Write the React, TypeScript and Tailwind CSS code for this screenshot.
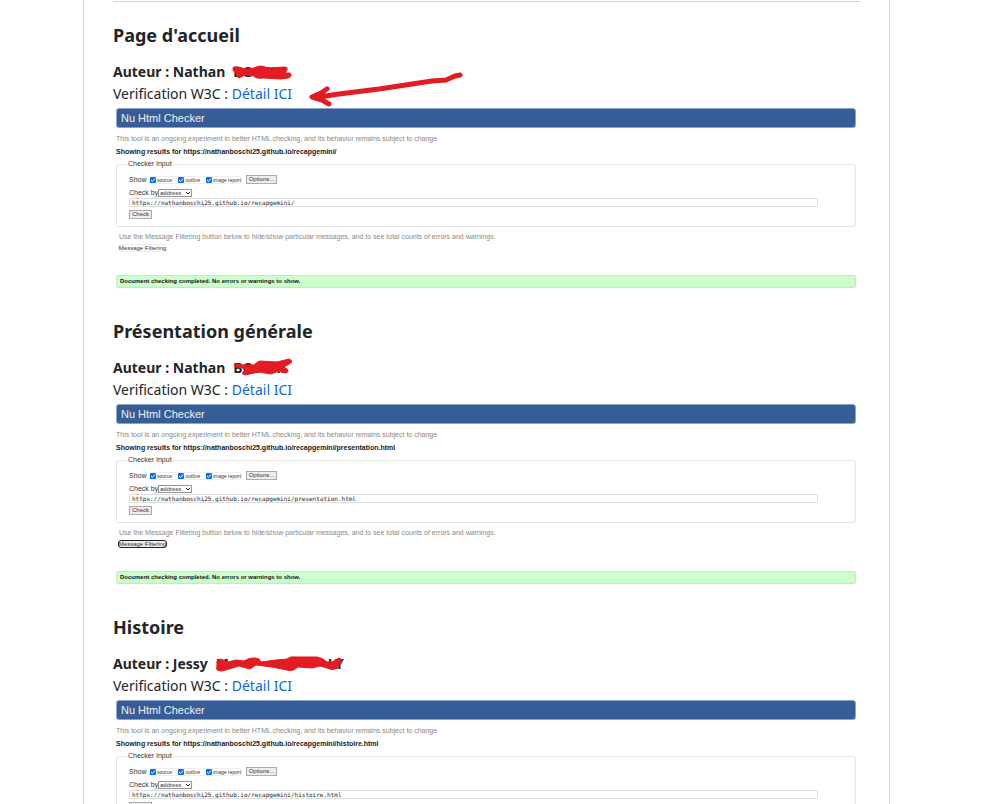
import React from "react";

type Entry = {
  title: string;
  author: string;
  name: React.ReactNode;
  page: string;
  focused?: boolean;
  results?: boolean;
};

const RED = "#e31b23";

function Scribble({ d }: { d: string }) {
  return (
    <svg className="pointer-events-none absolute left-0 top-0 overflow-visible" width="130" height="22" fill={RED} stroke={RED} strokeWidth="1" strokeLinejoin="round" aria-hidden="true">
      <path d={d} />
    </svg>
  );
}

function Arrow() {
  return (
    <svg className="pointer-events-none absolute -top-4 left-[196px] overflow-visible" width="156" height="42" fill="none" stroke={RED} strokeWidth="5" strokeLinecap="round" strokeLinejoin="round" aria-hidden="true">
      <path d="M151 8l-5 1-9 4-14 1-53 8-40 5-20 3M18 22l-6 4-9 4 10 3 7 4" />
    </svg>
  );
}

const entries: Entry[] = [
  {
    title: "Page d'accueil",
    author: "Nathan",
    name: (
      <>
        <span>BOSCHI</span>
        <Scribble d="M0 7C2 4 8 7 13 8L21 7Q28 3 34 7L52 6Q55 6 54 9L52 12 57 12Q60 15 55 17L48 18 30 17Q23 18 21 15L12 14 6 17Q3 16 3 12Q-1 10 0 7Z" />
      </>
    ),
    page: "",
    results: true,
  },
  {
    title: "Présentation générale",
    author: "Nathan",
    name: (
      <>
        <span>BOSCHI</span>
        <Scribble d="M2 7L11 8 22 8Q23 5 27 4L44 5 56 2Q60 3 58 6L51 10 54 12Q57 15 52 16L46 14 38 17 26 15 12 18Q8 17 10 15L15 12 3 10Q0 9 2 7Z" />
      </>
    ),
    page: "presentation.html",
    focused: true,
    results: true,
  },
  {
    title: "Histoire",
    author: "Jessy",
    name: (
      <>
        <span className="flex w-[128px] justify-between"><span>M</span><span>LY</span></span>
        <Scribble d="M1 8L5 6 12 9 20 7 28 8Q36 3 43 6L45 9 60 7 71 6Q74 3 80 4L101 4Q107 5 111 9L116 9 123 5Q127 6 125 9L122 15Q116 18 111 15L104 13 96 15 82 14Q76 19 71 17L56 14 40 12 34 16 23 13 6 18Q-1 18 1 14Z" />
      </>
    ),
    page: "histoire.html",
  },
];

function Tick({ id, label, width }: { id: string; label: string; width: string }) {
  return (
    <span className={`relative flex items-center gap-px ${width}`}>
      <input id={id} type="checkbox" defaultChecked className="size-[6px] shrink-0 appearance-none rounded-[1px] bg-[#0d6fe8]" />
      <svg className="pointer-events-none absolute left-0" width="6" height="6" fill="none" stroke="#fff" aria-hidden="true"><path d="M1 3l1.5 1.5L5 1.5" /></svg>
      <label htmlFor={id} className="whitespace-nowrap text-[5px] leading-[6px]">{label}</label>
    </span>
  );
}

function Checker({ page, focused, results }: { page: string; focused?: boolean; results?: boolean }) {
  const id = page || "accueil";
  const url = `https://nathanboschi25.github.io/recapgemini/${page}`;
  return (
    <div className="pr-1 pl-[3px] font-['Liberation_Sans',Arial,sans-serif] text-[7px] leading-[8px] text-[#333]">
      <div className="h-5 rounded-[3px] border border-[#8aa3c8] bg-[#365d95] px-1 text-[11px] leading-[18px] text-[#eef2f8]">Nu Html Checker</div>
      <p className="mt-[7px] text-[#888]">This tool is an ongoing experiment in better HTML checking, and its behavior remains subject to change</p>
      <p className="mt-[5px] font-bold text-[#222]">Showing results for {url}</p>
      <fieldset className="mt-1 h-[67px] rounded-[3px] border border-[#e4e4e4] px-3">
        <legend className="-ml-[2px] px-px">Checker Input</legend>
        <div className="mt-[7px] flex h-[9px] items-center">
          <span className="w-5">Show</span>
          <span className="flex h-[8px] w-[93px] items-center rounded-[3px] border border-[#eee]">
            <Tick id={`${id}-source`} label="source" width="w-[29px]" />
            <Tick id={`${id}-outline`} label="outline" width="w-[28px]" />
            <Tick id={`${id}-image`} label="image report" width="w-[35px]" />
          </span>
          <button type="button" className="ml-1 h-[9px] w-[31px] border border-[#aaa] bg-[#eee] text-[6px] leading-[7px]">Options...</button>
        </div>
        <div className="mt-[5px] flex h-[8px] items-center">
          <label htmlFor={`${id}-by`} className="w-[29px] whitespace-nowrap">Check by</label>
          <span className="relative flex">
            <select id={`${id}-by`} className="h-[8px] w-[34px] appearance-none border border-[#999] bg-white pl-px text-[6px] leading-[6px]"><option>address</option></select>
            <svg className="pointer-events-none absolute right-[2px] top-[3px]" width="4" height="3" fill="none" stroke="#222" aria-hidden="true"><path d="M0 0l2 2 2-2" /></svg>
          </span>
        </div>
        <input aria-label="Address" type="text" defaultValue={url} className="mt-px block h-[9px] w-[calc(100%-25px)] rounded-[2px] border border-[#ddd] px-[2px] font-['DejaVu_Sans_Mono',monospace] text-[6px] leading-[7px] text-[#222]" />
        <button type="button" className="mt-[3px] block h-[9px] w-[23px] border border-[#aaa] bg-[#eee] text-[6px] leading-[7px]">Check</button>
      </fieldset>
      {results && (
        <>
          <p className="mt-[6px] pl-[3px] text-[#888]">Use the Message Filtering button below to hide/show particular messages, and to see total counts of errors and warnings.</p>
          <button type="button" className={`mt-[3px] ml-[2px] flex h-[8px] w-[49px] items-center justify-center whitespace-nowrap rounded-[3px] border text-[6px] leading-[6px] ${focused ? "border-[#222] bg-[#eee]" : "border-[#eee]"}`}>Message Filtering</button>
          <p className="mt-[23px] h-[13px] rounded-[2px] border border-[#c5e8c5] bg-[#ccffcc] px-[3px] text-[6px] leading-[11px] font-bold text-[#111]">Document checking completed. No errors or warnings to show.</p>
        </>
      )}
    </div>
  );
}

export default function App() {
  return (
    <div className="h-screen overflow-hidden bg-white">
      <main className="mr-[93px] ml-[83px] border-x border-[#d0d3d6] px-[29px] pt-px font-['Noto_Sans',sans-serif] text-[#212529]">
        <hr className="border-[#d4d4d4]" />
        {entries.map((e) => (
          <section key={e.title} className="h-[296px] pt-[19px]">
            <h2 className="text-[18px] leading-7 font-bold">{e.title}</h2>
            <h3 className="mt-3 flex gap-2 text-[14px] leading-[22px] font-bold">
              <span>Auteur : {e.author}</span>
              <span className="relative">{e.name}</span>
            </h3>
            <p className="relative mb-[3px] text-[14px] leading-[22px]">
              Verification W3C : <a href="#detail" className="text-[#0d66df]">Détail ICI</a>
              {e.page === "" && <Arrow />}
            </p>
            <Checker page={e.page} focused={e.focused} results={e.results} />
          </section>
        ))}
      </main>
    </div>
  );
}
